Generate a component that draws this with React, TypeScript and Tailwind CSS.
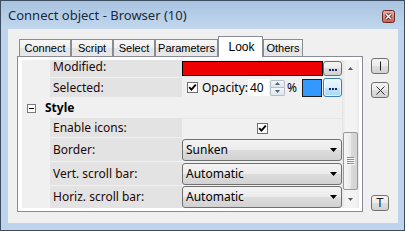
import React from "react";

function CheckBox() {
  return (
    <svg width="11" height="11" viewBox="0 0 11 11" className="shrink-0 block">
      <rect x="0.5" y="0.5" width="10" height="10" fill="#ffffff" stroke="#6f6f6f" />
      <path d="M2.2 5.2 L4.4 7.6 L8.8 2.6" stroke="#000000" strokeWidth="1.9" fill="none" />
    </svg>
  );
}

function Dots() {
  return (
    <svg width="8" height="2" viewBox="0 0 8 2" className="block">
      <rect x="0" y="0" width="2" height="2" fill="#24246e" />
      <rect x="3" y="0" width="2" height="2" fill="#24246e" />
      <rect x="6" y="0" width="2" height="2" fill="#24246e" />
    </svg>
  );
}

function DropArrow() {
  return (
    <svg width="7" height="4" viewBox="0 0 7 4" className="block shrink-0 ml-auto">
      <path d="M0 0H7L3.5 4Z" fill="#000000" />
    </svg>
  );
}

function Combo({ text }: { text: string }) {
  return (
    <div className="h-[22px] w-[160px] rounded-[3px] border border-[#707070] bg-[linear-gradient(#f3f3f3,#ebebeb_50%,#dddddd_50%,#d2d2d2)] flex items-center pl-[3px] pr-[4px] text-[12px] text-black leading-none">
      <span>{text}</span>
      <DropArrow />
    </div>
  );
}

function Label({ text, extra }: { text: string; extra?: string }) {
  return (
    <div className={"w-[132px] h-full bg-[#e3e3e3] flex items-center pl-[3px] text-[12px] text-[#220808] leading-none whitespace-nowrap " + (extra ?? "")}>
      {text}
    </div>
  );
}

function SideButton({ children }: { children: React.ReactNode }) {
  return (
    <div className="w-[18px] h-[16px] rounded-[3px] border border-[#707070] bg-[linear-gradient(#f3f3f3,#ebebeb_50%,#dddddd_50%,#d2d2d2)] flex items-center justify-center">
      {children}
    </div>
  );
}

export default function App() {
  return (
    <div className="w-[405px] h-[231px] bg-[#bed4ec] border border-[#3e4d5d] flex flex-col overflow-hidden [font-family:'Noto_Sans','Open_Sans',sans-serif]">
      {/* Title bar */}
      <div className="h-[28px] shrink-0 bg-[linear-gradient(#a8c3e1,#c2d7ed)] flex pl-[7px] pr-[9px]">
        <span className="mt-[6px] self-start text-[13px] leading-[17px] text-[#1a2a3d] whitespace-nowrap">
          Connect object - Browser (10)
        </span>
        <svg width="13" height="13" viewBox="0 0 13 13" className="ml-auto mt-[9px] self-start block">
          <defs>
            <linearGradient id="cg" x1="0" y1="0" x2="0" y2="1">
              <stop offset="0" stopColor="#eab0a6" />
              <stop offset="0.5" stopColor="#d7897c" />
              <stop offset="1" stopColor="#c65b4c" />
            </linearGradient>
          </defs>
          <rect x="0.5" y="0.5" width="12" height="12" rx="2" fill="url(#cg)" stroke="#6d2a22" />
          <path d="M4 4L9 9M9 4L4 9" stroke="#3b1712" strokeWidth="3" />
          <path d="M4 4L9 9M9 4L4 9" stroke="#ffffff" strokeWidth="1.5" />
        </svg>
      </div>

      {/* Client area */}
      <div className="ml-[7px] mr-[6px] h-[194px] shrink-0 bg-[#f0f0f0] flex pl-[9px] pt-[7px]">
        <div className="w-[346px] flex flex-col">
          {/* Tabs */}
          <div className="h-[20px] flex items-end pl-[2px] text-[11px] leading-none text-black [font-family:'Liberation_Sans',Arial,sans-serif]">
            <div className="w-[52px] h-[17px] border border-b-0 border-[#898c95] bg-[linear-gradient(#f7f7f7,#efefef_50%,#e3e3e3_50%,#e8e8e8)] flex items-center justify-center">Connect</div>
            <div className="w-[42px] h-[17px] border border-b-0 border-[#898c95] bg-[linear-gradient(#f7f7f7,#efefef_50%,#e3e3e3_50%,#e8e8e8)] flex items-center justify-center">Script</div>
            <div className="w-[42px] h-[17px] border border-b-0 border-[#898c95] bg-[linear-gradient(#f7f7f7,#efefef_50%,#e3e3e3_50%,#e8e8e8)] flex items-center justify-center">Select</div>
            <div className="w-[63px] h-[17px] border border-b-0 border-[#898c95] bg-[linear-gradient(#f7f7f7,#efefef_50%,#e3e3e3_50%,#e8e8e8)] flex items-center justify-center">Parameters</div>
            <div className="relative z-10 -mb-px w-[45px] h-[21px] border border-b-0 border-[#898c95] bg-white flex items-start justify-center pt-[4px] pl-[2px] text-[12px]">Look</div>
            <div className="w-[40px] h-[17px] border border-b-0 border-[#898c95] bg-[linear-gradient(#f7f7f7,#efefef_50%,#e3e3e3_50%,#e8e8e8)] flex items-center justify-center pt-px">Others</div>
          </div>

          {/* Panel */}
          <div className="h-[156px] border border-[#898c95] bg-white pt-[3px] pl-[4px] pr-[3px] pb-[3px] flex">
            <div className="w-[320px] h-[148px] flex flex-col bg-[#f0f0f0]">
              {/* Modified (partly scrolled out of view) */}
              <div className="h-[17px] mb-px flex shrink-0">
                <div className="w-[28px]" />
                <Label text="Modified:" extra="pb-[3px]" />
                <div className="w-[160px] flex items-end pb-px">
                  <div className="w-[141px] h-[15px] bg-[#ee0000] border border-black" />
                  <div className="w-[19px] h-[15px] rounded-[3px] border border-[#707070] bg-[linear-gradient(#f3f3f3,#ebebeb_50%,#dddddd_50%,#d2d2d2)] flex items-end justify-center pb-[4px]">
                    <Dots />
                  </div>
                </div>
              </div>

              {/* Selected */}
              <div className="h-[19px] mb-px flex shrink-0">
                <div className="w-[28px]" />
                <Label text="Selected:" />
                <div className="w-[160px] flex items-center text-[12px] leading-none text-black">
                  <div className="ml-[5px]"><CheckBox /></div>
                  <span className="ml-[4px] w-[46px] whitespace-nowrap">Opacity:</span>
                  <div className="w-[21px] h-[17px] bg-white flex items-center pl-[2px]">40</div>
                  <div className="ml-px w-[15px] h-[16px] flex flex-col">
                    <div className="h-[8px] rounded-t-[2px] border border-[#b5bfcc] bg-[linear-gradient(#f4f6f9,#dfe5ed)] flex items-center justify-center">
                      <svg width="5" height="3" viewBox="0 0 5 3" className="block"><path d="M2.5 0L5 3H0Z" fill="#4a5e7e" /></svg>
                    </div>
                    <div className="h-[8px] rounded-b-[2px] border border-t-0 border-[#b5bfcc] bg-[linear-gradient(#f4f6f9,#dfe5ed)] flex items-center justify-center">
                      <svg width="5" height="3" viewBox="0 0 5 3" className="block"><path d="M0 0H5L2.5 3Z" fill="#4a5e7e" /></svg>
                    </div>
                  </div>
                  <span className="ml-[2px] w-[10px]">%</span>
                  <div className="ml-[5px] w-[20px] h-[18px] bg-[#3399ff] border border-[#1c1c1c]" />
                  <div className="ml-px w-[19px] h-[19px] rounded-[3px] border border-[#3c7fb1] bg-[linear-gradient(#eaf6fd,#d9f0fc_50%,#bee6fd_50%,#a7d9f5)] shadow-[inset_0_0_0_1px_#ffffffaa] flex items-end justify-center pb-[6px]">
                    <Dots />
                  </div>
                </div>
              </div>

              {/* Style header */}
              <div className="h-[20px] flex items-center shrink-0">
                <div className="ml-[5px] w-[9px] h-[9px] border border-[#7a7a7a] bg-white flex items-center justify-center">
                  <div className="w-[5px] h-px bg-black" />
                </div>
                <span className="ml-[9px] text-[12px] font-bold leading-none text-black">Style</span>
              </div>

              {/* Enable icons */}
              <div className="h-[19px] mb-px flex shrink-0">
                <div className="w-[28px]" />
                <Label text="Enable icons:" />
                <div className="w-[160px] border-t border-[#e6e6e6] flex items-center justify-center">
                  <CheckBox />
                </div>
              </div>

              {/* Border */}
              <div className="h-[23px] mb-px flex shrink-0">
                <div className="w-[28px]" />
                <Label text="Border:" />
                <div className="w-[160px] flex items-end">
                  <Combo text="Sunken" />
                </div>
              </div>

              {/* Vert scroll bar */}
              <div className="h-[23px] mb-px flex shrink-0">
                <div className="w-[28px]" />
                <Label text="Vert. scroll bar:" />
                <div className="w-[160px] flex items-end">
                  <Combo text="Automatic" />
                </div>
              </div>

              {/* Horiz scroll bar */}
              <div className="h-[22px] flex shrink-0">
                <div className="w-[28px]" />
                <Label text="Horiz. scroll bar:" />
                <div className="w-[160px] flex items-end">
                  <Combo text="Automatic" />
                </div>
              </div>
            </div>

            {/* Scrollbar */}
            <div className="w-[17px] h-[148px] flex flex-col bg-[linear-gradient(90deg,#e4e4e4,#f3f3f3_20%,#f3f3f3_80%,#e9e9e9)]">
              <div className="h-[17px] shrink-0 flex items-center justify-center">
                <svg width="5" height="3" viewBox="0 0 5 3" className="block"><path d="M2.5 0L5 3H0Z" fill="#5a5a5a" /></svg>
              </div>
              <div className="mt-[55px] mx-px h-[58px] shrink-0 rounded-[2px] border border-[#9a9a9a] bg-[linear-gradient(90deg,#f5f5f5,#ebebeb_50%,#dadada_50%,#d2d2d2)] flex items-center justify-center">
                <svg width="8" height="8" viewBox="0 0 8 8" className="block">
                  <rect x="0" y="0" width="7" height="1" fill="#8c8c8c" />
                  <rect x="1" y="1" width="7" height="1" fill="#ffffff" />
                  <rect x="0" y="2" width="7" height="1" fill="#8c8c8c" />
                  <rect x="1" y="3" width="7" height="1" fill="#ffffff" />
                  <rect x="0" y="4" width="7" height="1" fill="#8c8c8c" />
                  <rect x="1" y="5" width="7" height="1" fill="#ffffff" />
                  <rect x="0" y="6" width="7" height="1" fill="#8c8c8c" />
                  <rect x="1" y="7" width="7" height="1" fill="#ffffff" />
                </svg>
              </div>
              <div className="flex-1" />
              <div className="h-[17px] shrink-0 flex items-center justify-center">
                <svg width="5" height="3" viewBox="0 0 5 3" className="block"><path d="M0 0H5L2.5 3Z" fill="#5a5a5a" /></svg>
              </div>
            </div>
          </div>
        </div>

        {/* Right side buttons */}
        <div className="ml-[8px] w-[18px] h-[176px] flex flex-col">
          <div className="mt-[22px]">
            <SideButton>
              <svg width="3" height="10" viewBox="0 0 3 10" className="block">
                <path d="M1.5 0.5V9.5" stroke="#1e1e1e" strokeWidth="1" fill="none" />
              </svg>
            </SideButton>
          </div>
          <div className="mt-[8px]">
            <SideButton>
              <svg width="9" height="9" viewBox="0 0 9 9" className="block">
                <path d="M0.5 0.5L8.5 8.5M8.5 0.5L0.5 8.5" stroke="#2a2a2a" strokeWidth="1" fill="none" />
              </svg>
            </SideButton>
          </div>
          <div className="mt-auto mb-px">
            <SideButton>
              <span className="text-[12px] leading-none text-[#1e1e1e] [font-family:'Liberation_Sans',Arial,sans-serif]">T</span>
            </SideButton>
          </div>
        </div>
      </div>
    </div>
  );
}
